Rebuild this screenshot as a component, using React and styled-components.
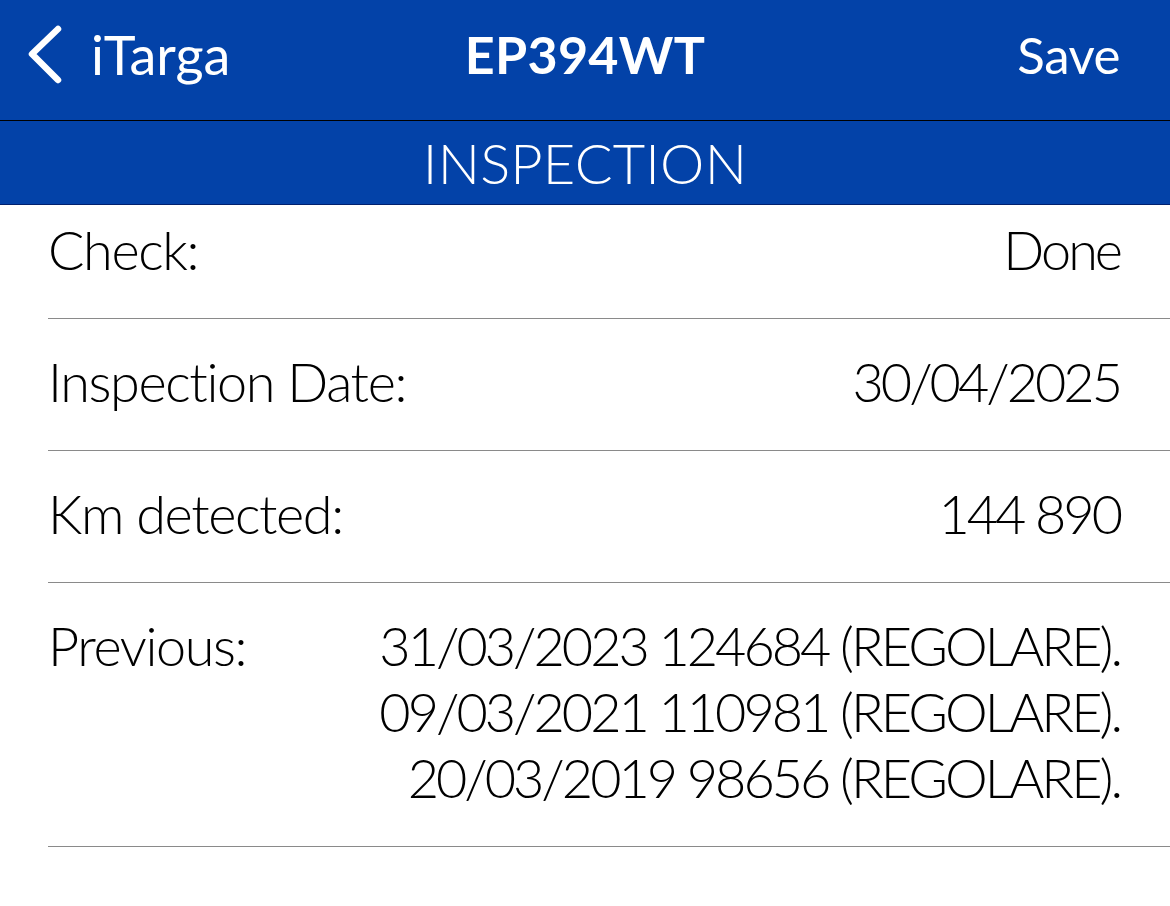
import React from 'react'
import styled, { createGlobalStyle } from 'styled-components'

const GlobalStyle = createGlobalStyle`
  html, body {
    margin: 0;
    padding: 0;
    background: #ffffff;
  }
  body {
    font-family: Lato, 'Noto Sans', sans-serif;
    color: #000;
  }
`

const BLUE = '#0342a8'

const Screen = styled.div`
  width: 1170px;
  min-height: 906px;
  background: #fff;
`

const NavBar = styled.header`
  height: 121px;
  box-sizing: border-box;
  background: ${BLUE};
  border-bottom: 1px solid #000;
  display: grid;
  grid-template-columns: 1fr auto 1fr;
  align-items: center;
  padding: 0 28px 12px;
  color: #fff;
`

const BackButton = styled.div`
  display: flex;
  align-items: center;
  gap: 23px;
  font-size: 54px;
  font-weight: 400;
`

const Title = styled.h1`
  margin: 0;
  font-size: 52px;
  font-weight: 700;
  letter-spacing: 0.3px;
`

const NavAction = styled.div`
  justify-self: end;
  padding-right: 22px;
  font-size: 51px;
  font-weight: 400;
  letter-spacing: -0.5px;
`

const SectionBar = styled.div`
  height: 83px;
  background: ${BLUE};
  border-bottom: 1px solid #00206e;
  display: flex;
  align-items: center;
  justify-content: center;
  color: #fff;
  font-size: 56px;
  font-weight: 300;
  letter-spacing: 0.2px;
`

const List = styled.div`
  padding-left: 48px;
`

const Row = styled.div`
  display: flex;
  justify-content: space-between;
  align-items: flex-start;
  padding: ${p => (p.first ? '12px' : '30px')} 50px 35px 0;
  border-bottom: 1px solid #8a8a8a;
  font-size: 54px;
  font-weight: 300;
  line-height: 66px;
`

const Label = styled.div`
  white-space: nowrap;
  letter-spacing: -1.4px;
`

const Value = styled.div`
  text-align: right;
  white-space: nowrap;
  letter-spacing: -3px;
`

const Chevron = () => (
  <svg width="40" height="64" viewBox="0 0 40 64">
    <path
      d="M30 7 L4 32 L30 58"
      fill="none"
      stroke="#fff"
      strokeWidth="6.5"
      strokeLinecap="round"
      strokeLinejoin="round"
    />
  </svg>
)

const rows = [
  { label: 'Check:', value: ['Done'] },
  { label: 'Inspection Date:', value: ['30/04/2025'] },
  { label: 'Km detected:', value: ['144 890'] },
  {
    label: 'Previous:',
    value: [
      '31/03/2023 124684 (REGOLARE).',
      '09/03/2021 110981 (REGOLARE).',
      '20/03/2019 98656 (REGOLARE).',
    ],
  },
]

const App = () => (
  <Screen>
    <GlobalStyle />
    <NavBar>
      <BackButton>
        <Chevron />
        iTarga
      </BackButton>
      <Title>EP394WT</Title>
      <NavAction>Save</NavAction>
    </NavBar>
    <SectionBar>INSPECTION</SectionBar>
    <List>
      {rows.map((r, i) => (
        <Row key={r.label} first={i === 0}>
          <Label>{r.label}</Label>
          <Value>
            {r.value.map(v => (
              <div key={v}>{v}</div>
            ))}
          </Value>
        </Row>
      ))}
    </List>
  </Screen>
)

export default App
